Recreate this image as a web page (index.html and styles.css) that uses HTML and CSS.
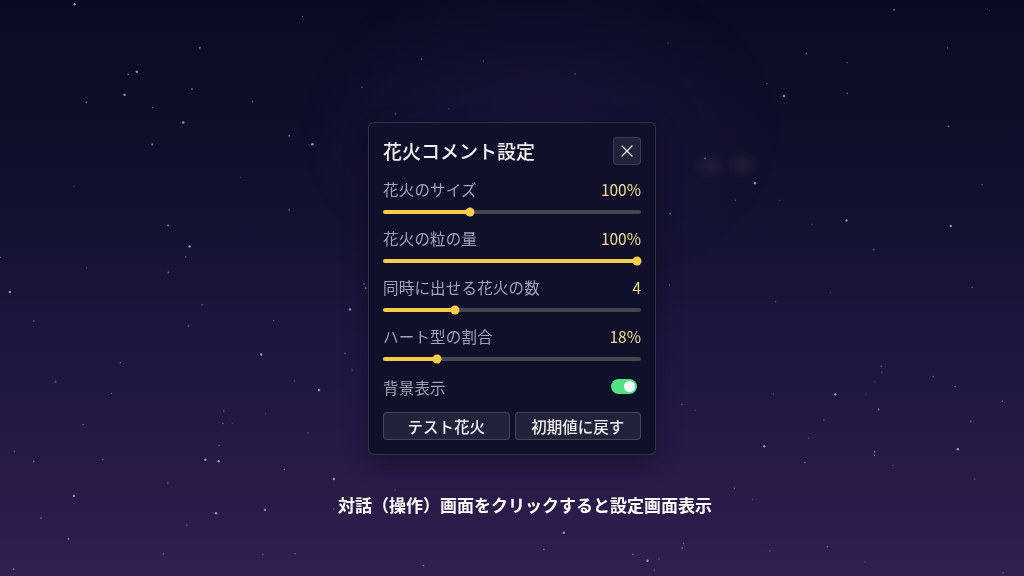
FILE: index.html
```html
<!DOCTYPE html>
<html lang="ja">
<head>
  <meta charset="UTF-8" />
  <meta name="viewport" content="width=device-width, initial-scale=1.0"/>
  <title>花火コメント設定</title>
  <link rel="stylesheet" href="styles.css">
</head>
<body>
  <canvas id="sky" width="1024" height="576"></canvas>
  <div class="glow glow-a"></div>
  <div class="glow glow-b"></div>
  <div class="glow glow-c"></div>

  <div class="panel">
    <div class="panel-head">
      <h2>花火コメント設定</h2>
      <button class="close" aria-label="閉じる">
        <svg width="12" height="12" viewBox="0 0 12 12"><path d="M1 1L11 11M11 1L1 11" stroke="#e6e6ee" stroke-width="1.3" stroke-linecap="round"/></svg>
      </button>
    </div>

    <div class="setting">
      <div class="setting-row"><span class="label">花火のサイズ</span><span class="value">100%</span></div>
      <div class="slider"><div class="track"><div class="fill" style="width: 34%"></div><div class="rail"><div class="thumb" style="left: 33%"></div></div></div></div>
    </div>
    <div class="setting">
      <div class="setting-row"><span class="label">花火の粒の量</span><span class="value">100%</span></div>
      <div class="slider"><div class="track"><div class="fill" style="width: 100%"></div><div class="rail"><div class="thumb" style="left: 100%"></div></div></div></div>
    </div>
    <div class="setting">
      <div class="setting-row"><span class="label">同時に出せる花火の数</span><span class="value">4</span></div>
      <div class="slider"><div class="track"><div class="fill" style="width: 28%"></div><div class="rail"><div class="thumb" style="left: 27%"></div></div></div></div>
    </div>
    <div class="setting">
      <div class="setting-row"><span class="label">ハート型の割合</span><span class="value">18%</span></div>
      <div class="slider"><div class="track"><div class="fill" style="width: 21%"></div><div class="rail"><div class="thumb" style="left: 20%"></div></div></div></div>
    </div>

    <div class="toggle-row">
      <span class="label">背景表示</span>
      <span class="toggle on"><span class="knob"></span></span>
    </div>

    <div class="actions">
      <button class="action">テスト花火</button>
      <button class="action">初期値に戻す</button>
    </div>
  </div>

  <p class="hint">対話（操作）画面をクリックすると設定画面表示</p>

  <script src="script.js"></script>
</body>
</html>
```

FILE: styles.css
```css
html, body {
  margin: 0;
  height: 100%;
}

body {
  font-family: "Noto Sans CJK JP", "Noto Sans", sans-serif;
  background: linear-gradient(to bottom, #0a0a22 0%, #12112e 35%, #1c1740 60%, #2a1a48 85%, #311f50 100%);
  display: flex;
  justify-content: center;
  align-items: center;
  overflow: hidden;
  position: relative;
}

#sky {
  position: absolute;
  left: 0;
  top: 0;
}

.glow {
  position: absolute;
  border-radius: 50%;
  pointer-events: none;
}

.glow-a {
  left: 300px;
  top: -40px;
  width: 480px;
  height: 340px;
  background: radial-gradient(closest-side, rgba(55, 45, 110, 0.22), rgba(55, 45, 110, 0));
}

.glow-b {
  left: 692px;
  top: 152px;
  width: 36px;
  height: 28px;
  background: radial-gradient(closest-side, rgba(140, 110, 130, 0.12), rgba(140, 110, 130, 0));
}

.glow-c {
  left: 724px;
  top: 150px;
  width: 36px;
  height: 28px;
  background: radial-gradient(closest-side, rgba(150, 115, 110, 0.12), rgba(150, 115, 110, 0));
}

.panel {
  position: relative;
  width: 258px;
  padding: 14px;
  background: #10102a;
  border: 1px solid rgba(255, 255, 255, 0.14);
  border-radius: 6px;
  box-shadow: 0 8px 24px rgba(0, 0, 0, 0.3);
}

.panel-head {
  display: flex;
  justify-content: space-between;
  align-items: center;
  margin-bottom: 13px;
}

.panel-head h2 {
  margin: 0;
  font-size: 19px;
  font-weight: 500;
  color: #f2f2f6;
  line-height: 28px;
}

.close {
  width: 28px;
  height: 28px;
  padding: 0;
  display: flex;
  justify-content: center;
  align-items: center;
  background: #22223a;
  border: 1px solid rgba(255, 255, 255, 0.12);
  border-radius: 4px;
  cursor: pointer;
}

.setting {
  margin-bottom: 10px;
}

.setting-row {
  display: flex;
  justify-content: space-between;
  line-height: 22px;
  height: 22px;
}

.label {
  font-size: 15.5px;
  font-weight: 400;
  color: #a3a3b3;
  letter-spacing: 0.2px;
}

.value {
  font-size: 15.5px;
  color: #f2dd92;
}

.slider {
  height: 10px;
  margin-top: 7px;
  display: flex;
  align-items: center;
}

.track {
  position: relative;
  width: 100%;
  height: 4px;
  background: #45454d;
  border-radius: 2px;
}

.fill {
  height: 100%;
  background: #f6cb48;
  border-radius: 2px;
}

.rail {
  position: absolute;
  left: 4px;
  right: 4px;
  top: 0;
  bottom: 0;
}

.thumb {
  position: absolute;
  top: 50%;
  width: 9px;
  height: 9px;
  border-radius: 50%;
  background: #f8cd4a;
  transform: translate(-50%, -50%);
}

.toggle-row {
  display: flex;
  justify-content: space-between;
  align-items: center;
  height: 22px;
  margin-top: 12px;
}

.toggle {
  width: 26px;
  height: 15px;
  margin-right: 4px;
  border-radius: 8px;
  background: #4fe384;
  display: flex;
  align-items: center;
  justify-content: flex-end;
  padding: 0 2px;
  box-sizing: border-box;
}

.knob {
  width: 11px;
  height: 11px;
  border-radius: 50%;
  background: #ffffff;
}

.actions {
  display: grid;
  grid-template-columns: 1fr 1fr;
  gap: 5px;
  margin-top: 14px;
}

.action {
  height: 28px;
  padding: 0;
  font-family: "Noto Sans CJK JP", "Noto Sans", sans-serif;
  font-size: 15.5px;
  font-weight: 500;
  color: #f0f0f4;
  background: #22223a;
  border: 1px solid rgba(255, 255, 255, 0.16);
  border-radius: 4px;
  cursor: pointer;
}

.hint {
  position: absolute;
  left: 26px;
  right: 0;
  bottom: 60px;
  margin: 0;
  text-align: center;
  font-size: 17px;
  font-weight: 700;
  color: #ffffff;
  line-height: 22px;
}
```

FILE: script.js
```js
// scatter small stars over the sky, seeded so the picture stays the same
const sky = document.getElementById("sky");
const ctx = sky.getContext("2d");

let seed = 11;
function rand() {
  seed = (seed * 16807) % 2147483647;
  return (seed - 1) / 2147483646;
}

for (let i = 0; i < 170; i++) {
  const x = rand() * 1024;
  const y = rand() * 576;
  const big = rand() < 0.12;
  const r = big ? 1.2 : 0.6 + rand() * 0.4;
  const a = big ? 0.7 : 0.2 + rand() * 0.4;
  ctx.fillStyle = `rgba(205, 205, 230, ${a})`;
  ctx.beginPath();
  ctx.arc(x, y, r, 0, Math.PI * 2);
  ctx.fill();
}
```
